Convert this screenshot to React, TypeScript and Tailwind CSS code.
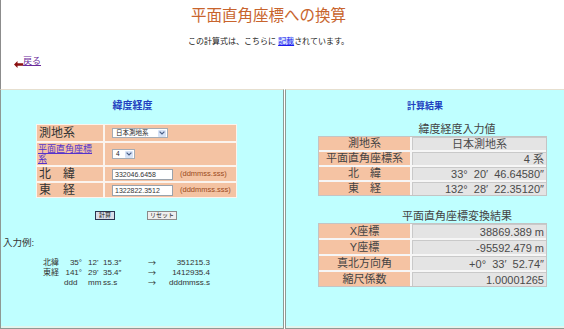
import React from 'react'

const inputRows = [
  { label: '測地系', value: '日本測地系', align: 'center' },
  { label: '平面直角座標系', value: '4 系', align: 'right' },
  { label: '北　緯', value: '33°  20′  46.64580″', align: 'right' },
  { label: '東　経', value: '132°  28′  22.35120″', align: 'right' },
]

const resultRows = [
  { label: 'X座標', value: '38869.389 m', align: 'right' },
  { label: 'Y座標', value: '-95592.479 m', align: 'right' },
  { label: '真北方向角', value: '+0°  33′  52.74″', align: 'right' },
  { label: '縮尺係数', value: '1.00001265', align: 'right' },
]

const examples = [
  { name: '北緯', deg: '35°', min: "12'", sec: '15.3″', out: '351215.3' },
  { name: '東経', deg: '141°', min: "29'", sec: '35.4″', out: '1412935.4' },
  { name: '', deg: 'ddd', min: 'mm', sec: 'ss.s', out: 'dddmmss.s' },
]

function FakeSelect({ label, className }: { label: string; className: string }) {
  return (
    <div className={`${className} h-[10px] bg-white border border-[#a5acb5] flex items-center justify-between pl-[3px] pr-[1px]`}>
      <span className="text-[6.5px] leading-none text-[#222]">{label}</span>
      <span className="w-[8px] h-[7px] bg-[#d6e2f6] rounded-[1px] flex items-center justify-center">
        <svg width="6" height="4" viewBox="0 0 6 4">
          <path d="M0.6 0.6 L3 3 L5.4 0.6" fill="none" stroke="#4b5f86" strokeWidth="1.2" />
        </svg>
      </span>
    </div>
  )
}

function FakeInput({ value, hint }: { value: string; hint: string }) {
  return (
    <div className="flex items-center">
      <div className="w-[61px] h-[11px] bg-white border border-[#9aa3ad] pl-[2px] text-[7px] leading-[9px] text-[#333]">
        {value}
      </div>
      <span className="ml-[7px] text-[7.5px] leading-none text-[#9a4a20]">{hint}</span>
    </div>
  )
}

function ResultTable({ rows, rowClass }: { rows: typeof inputRows; rowClass: string }) {
  return (
    <div className="ml-[32px] w-[229px] border border-[#c4c4c4] bg-[#f6f6f6] grid grid-cols-[91px_134px] gap-[2px]">
      {rows.map(r => (
        <React.Fragment key={r.label}>
          <div className={`${rowClass} bg-[#f5c3a3] text-center text-[11px] text-[#444]`}>{r.label}</div>
          <div
            className={`${rowClass} bg-[#e4e4e4] border-t border-l border-[#c9c9c9] px-[2px] text-[11px] text-[#4a4a4a] whitespace-pre ${
              r.align === 'center' ? 'text-center' : 'text-right'
            }`}
          >
            {r.value}
          </div>
        </React.Fragment>
      ))}
    </div>
  )
}

export default function App() {
  return (
    <div className="w-[564px] h-[329px] bg-white overflow-hidden flex flex-col font-['Liberation_Sans','Noto_Sans_CJK_JP',sans-serif]">
      {/* Header */}
      <div className="h-[89px] border-l border-[#8c8c8c] flex flex-col pr-[28px]">
        <h1 className="mt-[4px] h-[20px] leading-[20px] text-center text-[15.5px] text-[#c8642d] font-['Noto_Sans_CJK_JP',serif]">
          平面直角座標への換算
        </h1>
        <p className="mt-[12px] h-[11px] leading-[11px] text-center text-[8px] text-[#222]">
          この計算式は、こちらに <a className="text-[#1a1aee] underline bg-[#d8e4ff]">記載</a>されています。
        </p>
        <div className="mt-[8px] ml-[13px] flex items-end h-[12px]">
          <svg width="9" height="7" viewBox="0 0 9 7" className="mb-[-1px]">
            <path d="M0 3.5 L3.5 0 L3.5 2.3 L9 2.3 L9 4.7 L3.5 4.7 L3.5 7 Z" fill="#8b1010" />
          </svg>
          <a className="text-[9px] leading-[11px] text-[#6a2a9a] underline">戻る</a>
        </div>
      </div>

      {/* Panels */}
      <div className="flex h-[240px] gap-[1px]">
        {/* Left: input */}
        <div className="w-[284px] border-l border-r border-t border-b border-[#8e9a94] border-t-[#e6dfcf] bg-[#bfffff] shadow-[inset_0_-2px_0_#e2f5ee] flex flex-col">
          <h2 className="mt-[10px] h-[12px] leading-[12px] pr-[19px] text-center text-[10px] font-bold text-[#2040c0]">
            緯度経度
          </h2>

          <div className="mt-[12px] ml-[35px] w-[201px] bg-[#fbf4ee] p-[1px] grid grid-cols-[66px_131px] gap-[2px]">
            <div className="h-[16px] bg-[#f4c3a3] pl-[2px] text-[12px] leading-[16px] text-[#333]">測地系</div>
            <div className="h-[16px] bg-[#f4c3a3] pl-[7px] flex items-center">
              <FakeSelect label="日本測地系" className="w-[56px]" />
            </div>

            <div className="h-[22px] bg-[#f4c3a3] pl-[1px] pt-[1px]">
              <a className="block w-[58px] text-[9px] leading-[10px] text-[#5533cc] underline">平面直角座標系</a>
            </div>
            <div className="h-[22px] bg-[#f4c3a3] pl-[7px] flex items-center">
              <FakeSelect label="4" className="w-[23px]" />
            </div>

            <div className="h-[14px] bg-[#f4c3a3] pl-[2px] text-[12px] leading-[14px] text-[#333]">北　緯</div>
            <div className="h-[14px] bg-[#f4c3a3] pl-[7px] flex items-center">
              <FakeInput value="332046.6458" hint="(ddmmss.sss)" />
            </div>

            <div className="h-[14px] bg-[#f4c3a3] pl-[2px] text-[12px] leading-[14px] text-[#333]">東　経</div>
            <div className="h-[14px] bg-[#f4c3a3] pl-[7px] flex items-center">
              <FakeInput value="1322822.3512" hint="(dddmmss.sss)" />
            </div>
          </div>

          <div className="mt-[13px] ml-[94px] flex gap-[32px]">
            <button className="w-[20px] h-[9px] bg-[#d9dde8] border border-[#2a3550] text-[6px] leading-[7px] text-[#111]">
              計算
            </button>
            <button className="w-[30px] h-[9px] bg-[#eeeeee] border border-[#8a8a8a] text-[6px] leading-[7px] text-[#222]">
              リセット
            </button>
          </div>

          <p className="mt-[17px] pl-[2px] h-[12px] text-[9.5px] leading-[12px] text-[#333]">入力例:</p>

          <div className="mt-[9px] ml-[42px] grid grid-cols-[20px_19px_6px_15px_45px_20px_42px] text-[8px] leading-[10px] text-[#333]">
            {examples.map((e, i) => (
              <React.Fragment key={i}>
                <span>{e.name}</span>
                <span className={e.name ? 'text-right' : 'pl-[1px]'}>{e.deg}</span>
                <span />
                <span>{e.min}</span>
                <span>{e.sec}</span>
                <span className="font-['Noto_Sans_CJK_JP',sans-serif]">→</span>
                <span className="text-right">{e.out}</span>
              </React.Fragment>
            ))}
          </div>
        </div>

        {/* Right: results */}
        <div className="flex-1 border-l border-t border-b border-[#8e9a94] border-t-[#e6dfcf] bg-[#bfffff] shadow-[inset_0_-2px_0_#e2f5ee] flex flex-col">
          <h2 className="mt-[10px] h-[12px] leading-[12px] text-center text-[9px] font-bold text-[#2040c0]">
            計算結果
          </h2>
          <p className="mt-[11px] h-[13px] leading-[13px] pl-[64px] text-center text-[11px] text-[#444]">緯度経度入力値</p>
          <ResultTable rows={inputRows} rowClass="h-[13px] leading-[13px]" />
          <p className="mt-[14px] h-[13px] leading-[13px] pl-[64px] text-center text-[11px] text-[#444]">平面直角座標変換結果</p>
          <ResultTable rows={resultRows} rowClass="h-[14px] leading-[14px]" />
        </div>
      </div>
    </div>
  )
}
